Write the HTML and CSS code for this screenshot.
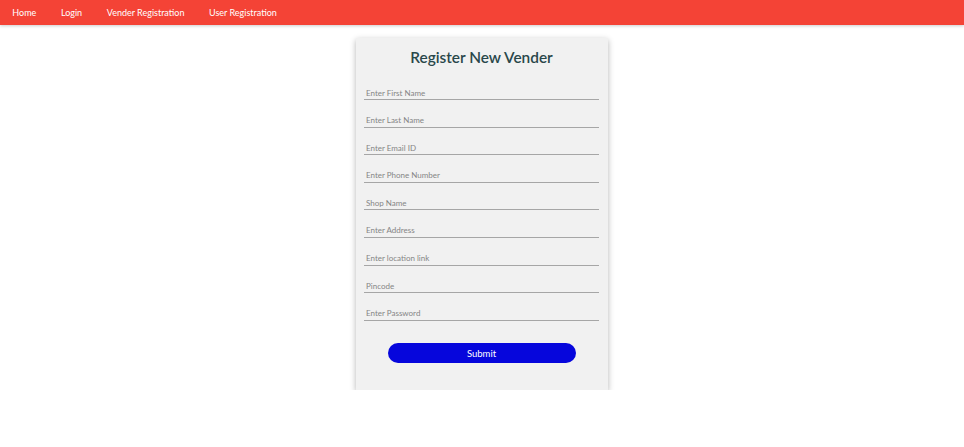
FILE: index.html
```html
<!DOCTYPE html>
<html lang="en">
<head>
<meta charset="utf-8">
<title>Register New Vender</title>
<link rel="stylesheet" href="styles.css">
</head>
<body>
<nav class="navbar">
  <a class="nav-link" href="#">Home</a>
  <a class="nav-link" href="#">Login</a>
  <a class="nav-link" href="#">Vender Registration</a>
  <a class="nav-link" href="#">User Registration</a>
</nav>
<main class="page">
  <form class="card">
    <h2 class="title">Register New Vender</h2>
    <div class="fields">
      <input class="field" type="text" placeholder="Enter First Name">
      <input class="field" type="text" placeholder="Enter Last Name">
      <input class="field" type="text" placeholder="Enter Email ID">
      <input class="field" type="text" placeholder="Enter Phone Number">
      <input class="field" type="text" placeholder="Shop Name">
      <input class="field" type="text" placeholder="Enter Address">
      <input class="field" type="text" placeholder="Enter location link">
      <input class="field" type="text" placeholder="Pincode">
      <input class="field" type="password" placeholder="Enter Password">
    </div>
    <button class="submit" type="button">Submit</button>
  </form>
</main>
</body>
</html>
```
FILE: styles.css
```css
* { box-sizing: border-box; }
body {
  margin: 0;
  background: #ffffff;
  font-family: Lato, "Open Sans", sans-serif;
}
.navbar {
  display: flex;
  align-items: center;
  height: 25px;
  background: #f44336;
  box-shadow: 0 1px 3px rgba(0,0,0,0.2);
}
.nav-link {
  color: #ffffff;
  text-decoration: none;
  font-size: 9px;
  padding: 1px 12.3px 0;
  line-height: 24px;
}
.page {
  display: flex;
  justify-content: center;
  padding-top: 13px;
}
.card {
  width: 252px;
  height: 352px;
  background: #f1f1f1;
  box-shadow: 0 2px 6px rgba(0,0,0,0.3);
  padding: 8px 9px 0 8px;
  display: flex;
  flex-direction: column;
}
.title {
  margin: 0;
  font-size: 15.4px;
  line-height: 22px;
  font-weight: 600;
  color: #29474a;
  text-align: center;
}
.fields {
  display: flex;
  flex-direction: column;
  gap: 10.6px;
  margin-top: 15px;
}
.field {
  width: 100%;
  height: 17px;
  border: none;
  border-bottom: 1px solid #a6a6a6;
  background: transparent;
  font-family: inherit;
  font-size: 8px;
  padding: 3px 2px 0 2px;
  outline: none;
}
.field::placeholder { color: #858585; }
.submit {
  align-self: center;
  margin-top: 22px;
  width: 188px;
  height: 20px;
  border: none;
  border-radius: 10px;
  background: #0606dc;
  color: #ffffff;
  font-family: inherit;
  font-size: 9.5px;
  padding: 1px 0 0;
}
```
